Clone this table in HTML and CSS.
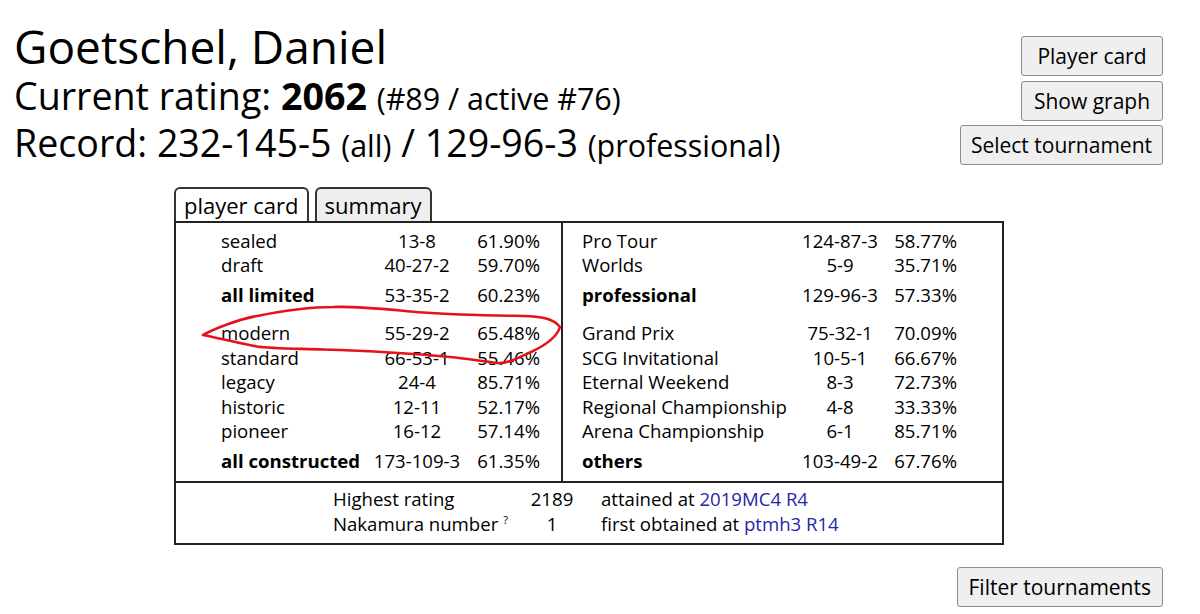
FILE: index.html
```html
<!DOCTYPE html>
<html lang="en">
<head>
<meta charset="utf-8">
<title>Goetschel, Daniel</title>
<link rel="stylesheet" href="styles.css">
</head>
<body>
<div class="page">
  <header class="top">
    <div class="info">
      <h1 class="name">Goetschel, Daniel</h1>
      <p class="line">Current rating: <b>2062</b> <span class="small">(#89 / active #76)</span></p>
      <p class="line">Record: 232-145-5 <span class="small">(all)</span> / 129-96-3 <span class="small">(professional)</span></p>
    </div>
    <div class="actions">
      <button class="btn">Player card</button>
      <button class="btn">Show graph</button>
      <button class="btn">Select tournament</button>
    </div>
  </header>

  <section class="card">
    <div class="tabs">
      <div class="tab active">player card</div>
      <div class="tab">summary</div>
    </div>
    <div class="box">
      <div class="halves">
        <div class="half left">
          <div class="grp">
            <div class="row"><span>sealed</span><span class="rec">13-8</span><span class="pct">61.90%</span></div>
            <div class="row"><span>draft</span><span class="rec">40-27-2</span><span class="pct">59.70%</span></div>
            <div class="row sum"><span>all limited</span><span class="rec">53-35-2</span><span class="pct">60.23%</span></div>
          </div>
          <div class="grp">
            <div class="row"><span>modern</span><span class="rec">55-29-2</span><span class="pct">65.48%</span></div>
            <div class="row"><span>standard</span><span class="rec">66-53-1</span><span class="pct">55.46%</span></div>
            <div class="row"><span>legacy</span><span class="rec">24-4</span><span class="pct">85.71%</span></div>
            <div class="row"><span>historic</span><span class="rec">12-11</span><span class="pct">52.17%</span></div>
            <div class="row"><span>pioneer</span><span class="rec">16-12</span><span class="pct">57.14%</span></div>
            <div class="row sum"><span>all constructed</span><span class="rec">173-109-3</span><span class="pct">61.35%</span></div>
          </div>
        </div>
        <div class="half right">
          <div class="grp">
            <div class="row"><span>Pro Tour</span><span class="rec">124-87-3</span><span class="pct">58.77%</span></div>
            <div class="row"><span>Worlds</span><span class="rec">5-9</span><span class="pct">35.71%</span></div>
            <div class="row sum"><span>professional</span><span class="rec">129-96-3</span><span class="pct">57.33%</span></div>
          </div>
          <div class="grp">
            <div class="row"><span>Grand Prix</span><span class="rec">75-32-1</span><span class="pct">70.09%</span></div>
            <div class="row"><span>SCG Invitational</span><span class="rec">10-5-1</span><span class="pct">66.67%</span></div>
            <div class="row"><span>Eternal Weekend</span><span class="rec">8-3</span><span class="pct">72.73%</span></div>
            <div class="row"><span>Regional Championship</span><span class="rec">4-8</span><span class="pct">33.33%</span></div>
            <div class="row"><span>Arena Championship</span><span class="rec">6-1</span><span class="pct">85.71%</span></div>
            <div class="row sum"><span>others</span><span class="rec">103-49-2</span><span class="pct">67.76%</span></div>
          </div>
        </div>
      </div>
      <div class="extra">
        <div class="xrow"><span>Highest rating</span><span class="val">2189</span><span class="note">attained at <a href="#">2019MC4 R4</a></span></div>
        <div class="xrow"><span>Nakamura number<sup class="help">?</sup></span><span class="val">1</span><span class="note">first obtained at <a href="#">ptmh3 R14</a></span></div>
      </div>
    </div>
  </section>

  <div class="footer">
    <button class="btn">Filter tournaments</button>
  </div>

  <svg class="annot" viewBox="0 0 1200 614" width="1200" height="614" aria-hidden="true">
    <path d="M203,335 C214,329 236,320 257,316 C282,311 306,307 333,307 C362,306 392,310 423,312.5 C458,315 498,315.5 523,316 C540,316.5 553,318 560,327 C557,337 546,345 531,352 C516,359 506,364 497,363 C482,361 462,358 450,357 C418,354 386,351.5 323,349.5 C290,348.5 270,348.5 257,346.5 C238,343 222,339 203,335 Z" fill="none" stroke="#e5121c" stroke-width="2.6" stroke-linejoin="round"/>
  </svg>
</div>
</body>
</html>
```

FILE: styles.css
```css
html, body {
  margin: 0;
  padding: 0;
  background: #fff;
}

body {
  font-family: "Open Sans", "Noto Sans", sans-serif;
  color: #000;
}

.page {
  position: relative;
  width: 1200px;
  height: 614px;
  box-sizing: border-box;
  padding: 21px 37px 0 14px;
  overflow: hidden;
}

.top {
  display: flex;
  justify-content: space-between;
  align-items: flex-start;
}

.info {
  height: 145px;
}

.name {
  margin: 0;
  font-size: 46px;
  font-weight: 400;
  line-height: 51px;
}

.line {
  margin: 0;
  font-size: 37.6px;
  line-height: 47px;
  height: 47px;
  white-space: nowrap;
}

.line b {
  font-weight: 700;
}

.small {
  font-size: 0.81em;
  line-height: 1;
}

.actions {
  display: flex;
  flex-direction: column;
  align-items: flex-end;
  gap: 4.5px;
  margin-top: 15px;
}

.btn {
  font-family: "Open Sans", "Noto Sans", sans-serif;
  font-size: 21px;
  color: #000;
  background: #efefef;
  border: 1px solid #8d8d8d;
  border-radius: 3px;
  height: 40px;
  min-width: 142px;
  padding: 0 10px;
  line-height: 38px;
  box-sizing: border-box;
}

.footer .btn {
  padding: 0 11px;
}

.card {
  margin: 21px 0 0 160px;
  width: 830px;
}

.tabs {
  display: flex;
  gap: 6px;
  height: 34px;
}

.tab {
  box-sizing: border-box;
  height: 34px;
  padding: 0 8px;
  border: 2px solid #333;
  border-bottom: none;
  border-radius: 6px 6px 0 0;
  background: #eee;
  font-size: 22px;
  line-height: 32px;
}

.tab.active {
  background: #fff;
}

.box {
  border: 2px solid #222;
  font-size: 18.6px;
}

.halves {
  display: grid;
  grid-template-columns: 387px 1fr;
  border-bottom: 2px solid #222;
}

.half {
  box-sizing: border-box;
  padding-top: 5.5px;
  padding-bottom: 7px;
}

.left {
  padding-left: 45px;
  border-right: 2px solid #222;
}

.right {
  padding-left: 19px;
}

.grp + .grp {
  margin-top: 13.5px;
}

.row {
  display: grid;
  height: 24.5px;
  line-height: 24.5px;
  white-space: nowrap;
}

.left .row {
  grid-template-columns: 145px 102px 72px;
}

.right .row {
  grid-template-columns: 208px 100px 67px;
}

.row.sum {
  margin-top: 5.5px;
  font-weight: 700;
}

.row.sum .rec,
.row.sum .pct {
  font-weight: 400;
}

.rec {
  text-align: center;
}

.pct {
  text-align: right;
}

.extra {
  padding: 4.75px 0 6.25px 157px;
}

.xrow {
  display: grid;
  grid-template-columns: 190px 58px auto;
  height: 24.5px;
  line-height: 24.5px;
  white-space: nowrap;
}

.val {
  text-align: center;
}

.note {
  padding-left: 20px;
}

.note a {
  color: #2626a8;
  text-decoration: none;
}

.help {
  font-size: 11px;
  line-height: 0;
  margin-left: 5px;
  vertical-align: 7px;
}

.footer {
  display: flex;
  justify-content: flex-end;
  margin-top: 22px;
}

.annot {
  position: absolute;
  top: 0;
  left: 0;
  pointer-events: none;
}
```
